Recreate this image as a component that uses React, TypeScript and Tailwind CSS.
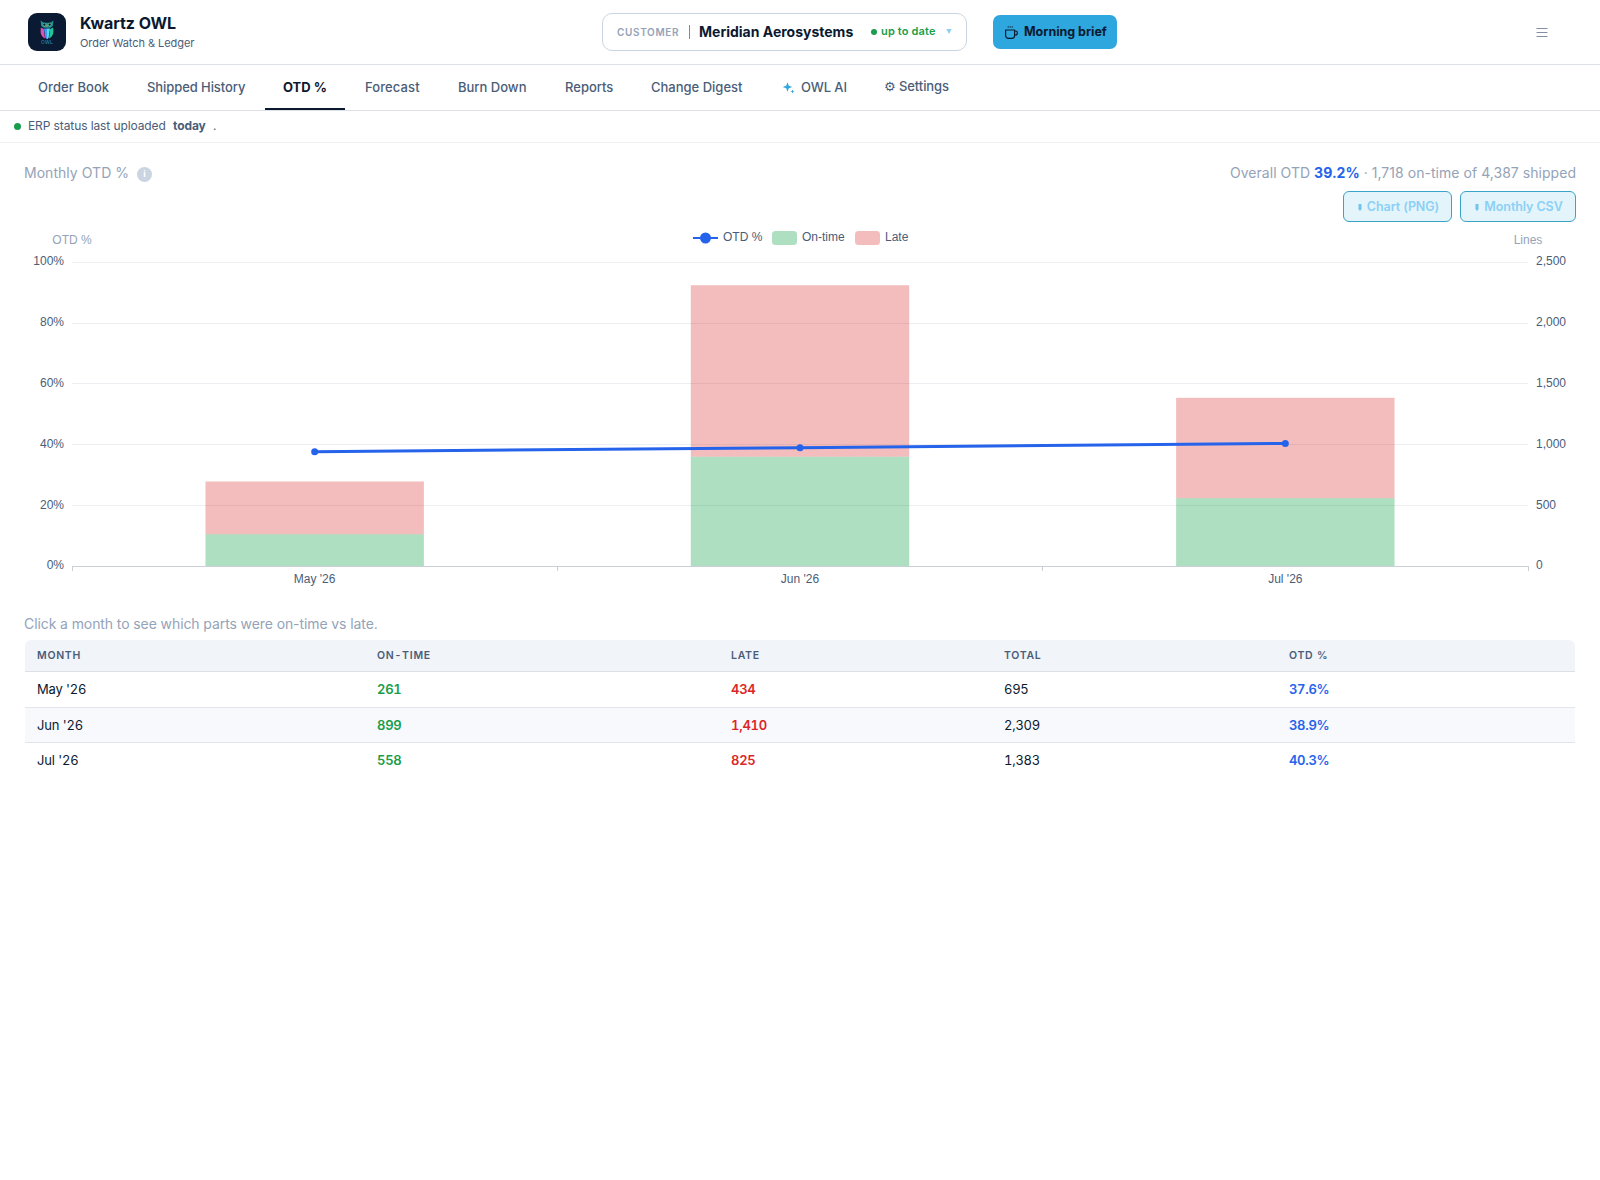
const months = [
  { label: "May '26", onTime: 261, late: 434, total: 695, otd: 37.6 },
  { label: "Jun '26", onTime: 899, late: 1410, total: 2309, otd: 38.9 },
  { label: "Jul '26", onTime: 558, late: 825, total: 1383, otd: 40.3 },
];

const fmt = (n: number) => n.toLocaleString("en-US");

function OwlLogo() {
  return (
    <svg width="38" height="38" viewBox="0 0 38 38" className="shrink-0">
      <rect width="38" height="38" rx="9" fill="#0a1a33" />
      <path d="M12.600 7.500l3.200 2.200h6.400l3.200-2.200-.6 5.500-2.400 1.800h-6.800L13.200 13z" fill="#1c8f9c" />
      <circle cx="16.300" cy="11.600" r="1.500" fill="#0a1a33" stroke="#6fd08a" strokeWidth=".7" />
      <circle cx="21.700" cy="11.600" r="1.500" fill="#0a1a33" stroke="#6fd08a" strokeWidth=".7" />
      <path d="M18.200 12.300h1.600L19 14.500z" fill="#f0a030" />
      <path d="M12.800 14.500l3 1.500 1.200 9.500c-3-1.500-4.400-4-4.400-7z" fill="#e04fb4" />
      <path d="M16 15.500h3v10.800l-1.600-1.300z" fill="#3c9cf5" />
      <path d="M19 15.500h3l-1.400 9.500-1.600 1.300z" fill="#4fdcf0" />
      <path d="M25.200 14.500l-3 1.500-1.200 9.500c3-1.500 4.400-4 4.400-7z" fill="#24c49a" />
      <text x="19" y="31.200" textAnchor="middle" fontSize="4.800" letterSpacing=".3" fill="#2ba0c4" fontFamily="Inter, sans-serif">OWL</text>
    </svg>
  );
}

function Header() {
  return (
    <header className="flex h-[65px] items-center border-b border-[#dde1e6] pl-7">
      <div className="flex w-[574px] items-center gap-[14px] pb-px">
        <OwlLogo />
        <div className="flex flex-col">
          <span className="text-[16px] font-bold leading-[22px] tracking-[-0.050px] text-[#0b1930]">Kwartz OWL</span>
          <span className="pt-px text-[11px] leading-[17px] tracking-[-0.050px] text-[#4a5d78]">Order Watch &amp; Ledger</span>
        </div>
      </div>
      <div className="mb-px flex h-[38px] w-[365px] shrink-0 items-center rounded-[10px] border border-[#cbd5e1] pl-[14px]">
        <span className="w-[72px] pt-0.5 text-[10px] font-semibold tracking-[0.650px] text-[#94a3b8]">CUSTOMER</span>
        <span className="mr-[9px] h-[14px] w-px bg-[#2ea6de]" />
        <span className="w-[172px] pb-px text-[14px] font-bold text-[#0b1930]">Meridian Aerosystems</span>
        <span className="mr-1 size-1.5 rounded-full bg-[#1a9d4b]" />
        <span className="w-[65px] text-[11px] font-semibold tracking-[0.150px] text-[#1a9d4b]">up to date</span>
        <svg width="6" height="5" viewBox="0 0 6 5" className="-mt-px"><path d="M.3 0h5.400L3 5z" fill="#8bd0f5" /></svg>
      </div>
      <div className="mb-px ml-[26px] flex h-[34px] w-[124px] shrink-0 items-center rounded-[7px] bg-[#2ea6de] pl-[11px] text-[#0b1930]">
        <svg width="14" height="14" viewBox="0 0 14 14" fill="none" stroke="currentColor" strokeWidth="1.200" className="mr-[6px] shrink-0">
          <path d="M1.600 5h9v5.500a2.800 2.800 0 0 1-2.800 2.800H4.400a2.800 2.800 0 0 1-2.800-2.800z" strokeLinejoin="round" />
          <path d="M10.600 6h.8a1.800 1.800 0 0 1 0 4h-.8" />
          <path d="M4.200 1v1.800M6.200 1v1.800M8.200 1v1.800" strokeWidth=".7" />
        </svg>
        <span className="whitespace-nowrap pt-px text-[12.500px] font-bold tracking-[-0.030px]">Morning brief</span>
      </div>
      <svg width="12" height="12" viewBox="0 0 12 12" className="ml-auto mr-[52px] text-[#8290a5]" stroke="currentColor" strokeWidth="1">
        <path d="M.5 2.500h11M.5 6.500h11M.5 10.500h11" />
      </svg>
    </header>
  );
}

const tab = "flex h-[45px] shrink-0 items-center px-[18px] text-[13px] font-medium whitespace-nowrap text-[#4a5d78]";

function Nav() {
  return (
    <nav className="flex h-[46px] gap-0.5 border-b border-[#dde1e6] pl-5">
      <span className={tab + " w-[107px] tracking-[0.080px]"}>Order Book</span>
      <span className={tab + " w-[134px] tracking-[-0.080px]"}>Shipped History</span>
      <span className="flex h-[45px] w-20 shrink-0 items-center border-b-2 border-[#0b1930] px-[18px] pt-0.5 text-[13px] font-bold text-[#0b1930]">OTD %</span>
      <span className={tab + " w-[91px] tracking-[0.100px]"}>Forecast</span>
      <span className={tab + " w-[105px]"}>Burn Down</span>
      <span className={tab + " w-[84px]"}>Reports</span>
      <span className={tab + " w-[127px]"}>Change Digest</span>
      <span className={tab + " w-[102px] tracking-[-0.100px]"}>
        <svg width="14" height="14" viewBox="0 0 14 14" fill="#2ea6de" className="ml-[2px] mr-[5px] shrink-0">
          <path d="M5.500 1.200l1.300 3.500L10.300 6 6.800 7.300 5.500 10.800 4.200 7.300.7 6l3.500-1.300z" />
          <path d="M10.500 8.500l.6 1.400 1.400.6-1.400.6-.6 1.400-.6-1.400-1.400-.6 1.400-.6z" />
        </svg>
        OWL AI
      </span>
      <span className="flex h-[45px] items-center px-[18px] pb-0.5 text-[13px] font-medium text-[#4a5d78]">
        <span className="tracking-[-0.080px]"><span className="font-['DejaVu_Sans']">⚙</span> Settings</span>
      </span>
    </nav>
  );
}

const LEFT = 48;
const WIDTH = 1456;
const TOP = 37;
const HEIGHT = 304;
const SLOT = WIDTH / 3;
const BAR = SLOT * 0.45;
const GRID_Y = [341, 280, 219, 158, 98, 37];
const LABEL_Y = [344, 284, 223, 162, 101, 40];

function Chart() {
  const base = TOP + HEIGHT;
  const points = months.map((m, i) => [LEFT + SLOT * (i + 0.5), base - (m.otd / 100) * HEIGHT]);
  return (
    <svg width="1552" height="380" viewBox="0 0 1552 380" fontFamily="'Liberation Sans', Arial, sans-serif" fontSize="12" className="block">
      {GRID_Y.map((y, i) => (
        <g key={i} fill="#4a5d78">
          <path d={`M${LEFT} ${y + 0.5}h${WIDTH}`} stroke={i === 0 ? "#cbd0d8" : "#eceef1"} />
          <text x="40" y={LABEL_Y[i]} textAnchor="end">{i * 20}%</text>
          <text x="1512" y={LABEL_Y[i]}>{fmt(i * 500)}</text>
        </g>
      ))}
      {[0, 1, 2, 3].map((i) => (
        <path key={i} d={`M${Math.floor(LEFT + SLOT * i) + 0.5} ${base}v5`} stroke="#cbd0d8" />
      ))}
      {months.map((m, i) => {
        const x = LEFT + SLOT * (i + 0.5) - BAR / 2;
        const g = (m.onTime / 2500) * HEIGHT;
        const r = (m.late / 2500) * HEIGHT;
        return (
          <g key={m.label}>
            <rect x={x} y={base - g} width={BAR} height={g} fill="#16a34a" fillOpacity=".35" />
            <rect x={x} y={base - g - r} width={BAR} height={r} fill="#dc2626" fillOpacity=".3" />
            <text x={LEFT + SLOT * (i + 0.5)} y={base + 17} textAnchor="middle" fill="#4a5d78">{m.label}</text>
          </g>
        );
      })}
      <polyline points={points.map((p) => p.join(",")).join(" ")} fill="none" stroke="#2563eb" strokeWidth="3" />
      {points.map(([x, y]) => <circle key={x} cx={x} cy={y} r="3.500" fill="#2563eb" />)}
      <g fill="#94a3b8">
        <text x="48" y="19" textAnchor="middle">OTD %</text>
        <text x="1504" y="19" textAnchor="middle">Lines</text>
      </g>
      <path d="M669 13h25" stroke="#2563eb" strokeWidth="2" />
      <circle cx="681.500" cy="13" r="5.500" fill="#2563eb" />
      <rect x="748" y="6" width="25" height="14" rx="3.500" fill="#16a34a" fillOpacity=".35" />
      <rect x="831" y="6" width="25" height="14" rx="3.500" fill="#dc2626" fillOpacity=".3" />
      <g fill="#4a5d78">
        <text x="699" y="16">OTD %</text>
        <text x="778" y="16">On-time</text>
        <text x="861" y="16">Late</text>
      </g>
    </svg>
  );
}

const exportButton = "flex h-[31px] items-center justify-center gap-[5px] rounded-md border border-[#3aa3c8] bg-[#e4f4fb] pl-0.5 pt-px text-[12.500px] font-semibold tracking-[-0.080px] text-[#8bd0f5]";

function DownloadMark() {
  return (
    <svg width="4" height="7" viewBox="0 0 4 7" fill="#74c3ea"><path d="M.5 0h3v4.500H4L2 7 0 4.500h.5z" /></svg>
  );
}

const row = "grid grid-cols-[340px_354px_273px_285px_1fr] items-center border-b pl-3";

export default function App() {
  return (
    <div className="min-h-[1180px] w-[1600px] bg-white font-[Inter,sans-serif]">
      <Header />
      <Nav />
      <div className="flex h-8 items-center border-b border-[#eef0f3] pl-[14px] text-[12px] text-[#4a5d78]">
        <span className="mr-[7px] size-[7px] rounded-full bg-[#1a9d4b]" />
        <span className="pb-0.5 tracking-[-0.100px]">
          ERP status last uploaded <b className="ml-1 mr-1 font-bold">today</b> .
        </span>
      </div>
      <main className="px-6">
        <div className="flex h-12 items-center justify-between pt-[11px] text-[14px] tracking-[0.040px] text-[#94a3b8]">
          <div className="flex items-center gap-2">
            Monthly OTD %
            <span className="mt-[3px] flex size-[15px] items-center justify-center rounded-full bg-[#cbd5e1] text-[9px] font-bold text-white">i</span>
          </div>
          <div>Overall OTD <b className="font-bold text-[#2563eb]">39.2%</b> · 1,718 on-time of 4,387 shipped</div>
        </div>
        <div className="flex h-[34px] items-start justify-end gap-2">
          <button className={exportButton + " w-[109px]"}><DownloadMark />Chart (PNG)</button>
          <button className={exportButton + " w-[116px]"}><DownloadMark />Monthly CSV</button>
        </div>
        <Chart />
        <p className="h-[35px] pt-[8px] text-[14px] leading-[22px] tracking-[-0.095px] text-[#94a3b8]">Click a month to see which parts were on-time vs late.</p>
        <div className="mx-px overflow-hidden rounded-t-md text-[13px] tabular-nums tracking-[-0.150px] text-[#0b1930]">
          <div className={row + " h-8 border-[#dde1e6] bg-[#f1f4f9] text-[10.500px] font-semibold tracking-[0.700px] text-[#4a5d78]"}>
            <span>MONTH</span><span className="tracking-[0.750px]">ON-TIME</span><span>LATE</span><span>TOTAL</span><span>OTD %</span>
          </div>
          {months.map((m, i) => (
            <div key={m.label} className={row + (i === 1 ? " h-[35px] border-[#e2e6ec] bg-[#f7f9fc] pt-px" : i === 0 ? " h-9 border-[#e2e6ec]" : " h-9 border-transparent")}>
              <span>{m.label}</span>
              <span className="font-semibold tracking-[-0.250px] text-[#1a9d4b]">{m.onTime}</span>
              <span className="font-semibold tracking-[-0.250px] text-[#dc2626]">{fmt(m.late)}</span>
              <span className="tracking-[-0.250px]">{fmt(m.total)}</span>
              <span className="font-semibold tracking-[-0.300px] text-[#2563eb]">{m.otd}%</span>
            </div>
          ))}
        </div>
      </main>
    </div>
  );
}
